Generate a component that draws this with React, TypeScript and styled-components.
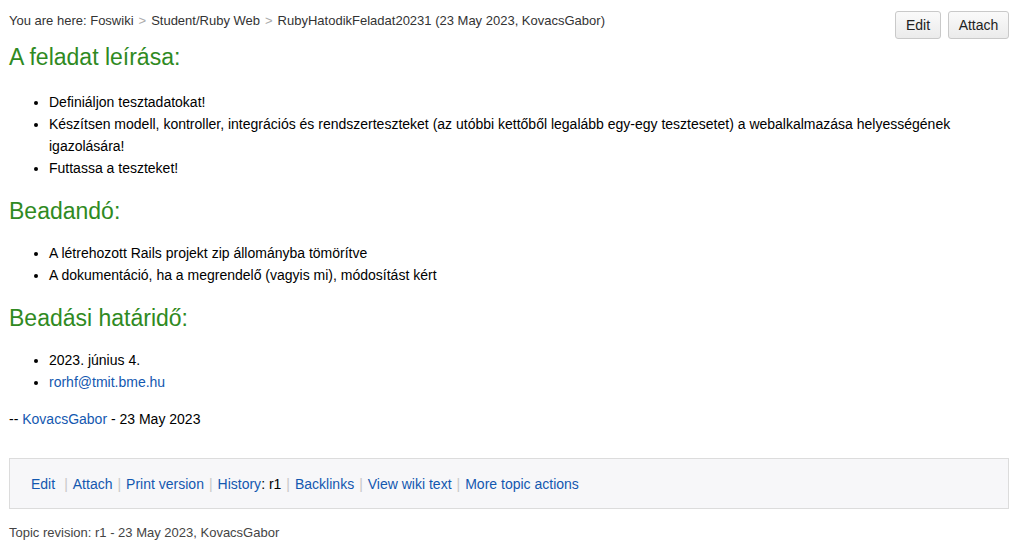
import React from "react";
import styled, { createGlobalStyle } from "styled-components";

const Global = createGlobalStyle`
  html, body { margin: 0; padding: 0; background: #fff; }
  body { font-family: "Liberation Sans", Arial, Helvetica, sans-serif; color: #000; }
  a { color: #1358b0; text-decoration: none; }
`;

const Page = styled.div`
  padding: 0 10px 0 9px;
`;

const TopBar = styled.div`
  display: flex;
  justify-content: space-between;
  align-items: flex-start;
  padding-top: 11px;
`;

const Breadcrumb = styled.div`
  font-size: 13px;
  line-height: 20px;
  color: #333;
`;

const Crumb = styled.span`
  color: #333;
`;

const CrumbSep = styled.span`
  color: #aaa;
  margin: 0 5px;
`;

const Buttons = styled.div`
  display: flex;
  gap: 7px;
`;

const Button = styled.button<{ $w: number }>`
  width: ${(p) => p.$w}px;
  height: 28px;
  border: 1px solid #c9c9c9;
  border-radius: 3px;
  background: linear-gradient(#fafafa, #ebebeb);
  font-family: "Liberation Sans", Arial, sans-serif;
  font-size: 14px;
  color: #222;
  padding: 0;
`;

const Heading = styled.h2<{ $first?: boolean }>`
  margin: ${(p) => (p.$first ? "4px" : "18px")} 0 0;
  font-size: 23px;
  line-height: 28px;
  font-weight: normal;
  color: #2f8a22;
`;

const List = styled.ul<{ $first?: boolean }>`
  margin: ${(p) => (p.$first ? "20px" : "17px")} 0 0;
  padding-left: 40px;
  font-size: 14px;
  line-height: 22px;
`;

const Item = styled.li``;

const Signature = styled.p`
  margin: 15px 0 0;
  font-size: 14px;
  line-height: 22px;
`;

const ActionBar = styled.div`
  margin-top: 28px;
  border: 1px solid #dcdcdc;
  background: #f7f7f9;
  height: 49px;
  display: flex;
  align-items: center;
  padding-left: 21px;
  font-size: 14px;
`;

const Action = styled.span`
  display: inline-flex;
  align-items: center;
`;

const ActionSep = styled.span<{ $wide?: boolean }>`
  color: #c8c8c8;
  margin: 0 5px 0 ${(p) => (p.$wide ? "9px" : "5px")};
`;

const Plain = styled.span`
  color: #000;
`;

const Revision = styled.div`
  margin-top: 15px;
  font-size: 13px;
  line-height: 18px;
  color: #444;
`;

export default function App() {
  const actions: { label: React.ReactNode; wide?: boolean }[] = [
    { label: <a href="#">Edit</a>, wide: true },
    { label: <a href="#">Attach</a> },
    { label: <a href="#">Print version</a> },
    {
      label: (
        <>
          <a href="#">History</a>
          <Plain>: r1</Plain>
        </>
      ),
    },
    { label: <a href="#">Backlinks</a> },
    { label: <a href="#">View wiki text</a> },
    { label: <a href="#">More topic actions</a> },
  ];
  return (
    <Page>
      <Global />
      <TopBar>
        <Breadcrumb>
          <Crumb>You are here: Foswiki</Crumb>
          <CrumbSep>&gt;</CrumbSep>
          <Crumb>Student/Ruby Web</Crumb>
          <CrumbSep>&gt;</CrumbSep>
          <Crumb>RubyHatodikFeladat20231 (23 May 2023, KovacsGabor)</Crumb>
        </Breadcrumb>
        <Buttons>
          <Button $w={46}>Edit</Button>
          <Button $w={61}>Attach</Button>
        </Buttons>
      </TopBar>

      <Heading $first>A feladat leírása:</Heading>
      <List $first>
        <Item>Definiáljon tesztadatokat!</Item>
        <Item>
          Készítsen modell, kontroller, integrációs és rendszerteszteket (az utóbbi kettőből
          legalább egy-egy tesztesetet) a webalkalmazása helyességének igazolására!
        </Item>
        <Item>Futtassa a teszteket!</Item>
      </List>

      <Heading>Beadandó:</Heading>
      <List>
        <Item>A létrehozott Rails projekt zip állományba tömörítve</Item>
        <Item>A dokumentáció, ha a megrendelő (vagyis mi), módosítást kért</Item>
      </List>

      <Heading>Beadási határidő:</Heading>
      <List>
        <Item>2023. június 4.</Item>
        <Item>
          <a href="#">rorhf@tmit.bme.hu</a>
        </Item>
      </List>

      <Signature>
        -- <a href="#">KovacsGabor</a> - 23 May 2023
      </Signature>

      <ActionBar>
        {actions.map((a, i) => (
          <Action key={i}>
            {a.label}
            {i < actions.length - 1 && <ActionSep $wide={a.wide}>|</ActionSep>}
          </Action>
        ))}
      </ActionBar>

      <Revision>Topic revision: r1 - 23 May 2023, KovacsGabor</Revision>
    </Page>
  );
}
